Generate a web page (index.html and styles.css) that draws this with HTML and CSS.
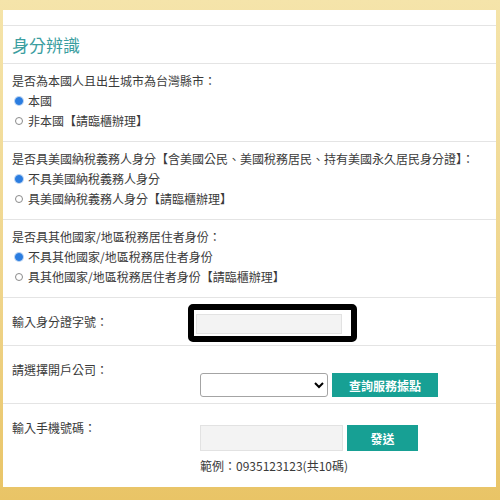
FILE: index.html
```html
<!DOCTYPE html>
<html lang="zh-Hant">
<head>
<meta charset="utf-8">
<title>身分辨識</title>
<link rel="stylesheet" href="styles.css">
</head>
<body>
<div class="page">
  <div class="topbar"></div>
  <h2 class="title">身分辨識</h2>

  <div class="section">
    <div class="question">是否為本國人且出生城市為台灣縣市：</div>
    <label class="option"><input type="radio" name="q1" checked><span>本國</span></label>
    <label class="option"><input type="radio" name="q1"><span>非本國【請臨櫃辦理】</span></label>
  </div>

  <div class="section">
    <div class="question">是否具美國納稅義務人身分【含美國公民、美國稅務居民、持有美國永久居民身分證】：</div>
    <label class="option"><input type="radio" name="q2" checked><span>不具美國納稅義務人身分</span></label>
    <label class="option"><input type="radio" name="q2"><span>具美國納稅義務人身分【請臨櫃辦理】</span></label>
  </div>

  <div class="section">
    <div class="question">是否具其他國家/地區稅務居住者身份：</div>
    <label class="option"><input type="radio" name="q3" checked><span>不具其他國家/地區稅務居住者身份</span></label>
    <label class="option"><input type="radio" name="q3"><span>具其他國家/地區稅務居住者身份【請臨櫃辦理】</span></label>
  </div>

  <div class="row row-id">
    <div class="label">輸入身分證字號：</div>
    <div class="field">
      <span class="redact"><input class="text-input id-input" type="text"></span>
    </div>
  </div>

  <div class="row row-company">
    <div class="label">請選擇開戶公司：</div>
    <div class="field inline">
      <select class="select"><option></option></select>
      <button class="btn btn-wide" type="button">查詢服務據點</button>
    </div>
  </div>

  <div class="row row-phone">
    <div class="label">輸入手機號碼：</div>
    <div class="field">
      <div class="inline">
        <input class="text-input phone-input" type="text">
        <button class="btn btn-send" type="button">發送</button>
      </div>
      <div class="hint">範例：0935123123(共10碼)</div>
    </div>
  </div>
</div>
</body>
</html>
```

FILE: styles.css
```css
* { box-sizing: border-box; }

html, body {
  margin: 0;
  padding: 0;
  height: 500px;
}

body {
  background: linear-gradient(to bottom, #f5e4aa 0%, #efd48a 60%, #e9c466 100%);
  font-family: "Noto Sans CJK TC", "Noto Sans", "Liberation Sans", sans-serif;
  font-size: 12px;
  color: #3a3a3a;
  padding: 10px 4px 13px 3px;
}

.page {
  background: #fff;
  height: 477px;
  overflow: hidden;
}

.topbar {
  height: 16px;
  border-bottom: 1px solid #e4e4e4;
}

.title {
  margin: 0;
  height: 38px;
  padding: 0 9px;
  font-size: 17px;
  font-weight: normal;
  line-height: 38px;
  color: #3b9ea0;
  border-bottom: 1px solid #e4e4e4;
}

.section {
  padding: 7px 9px 9px;
  border-bottom: 1px solid #e4e4e4;
  height: 78px;
}

.question {
  line-height: 20px;
  height: 20px;
  white-space: nowrap;
}

.option {
  display: flex;
  align-items: center;
  height: 20px;
  line-height: 20px;
}

.option input {
  appearance: none;
  -webkit-appearance: none;
  width: 8px;
  height: 8px;
  margin: 0 5px 0 3px;
  border: 1px solid #8a8a8a;
  border-radius: 50%;
  background: #fff;
  flex: none;
}

.option input:checked {
  border-color: #2b7de0;
  background: #2b7de0;
  box-shadow: 0 0 0 1px #b7d2f3;
}

.row {
  display: grid;
  grid-template-columns: 188px 1fr;
  padding: 16px 9px 0;
  border-bottom: 1px solid #e4e4e4;
}

.row-id { height: 48px; }
.row-company { height: 58px; }
.row-phone { height: 84px; border-bottom: none; }

.label {
  line-height: 16px;
}

.inline {
  display: flex;
  align-items: center;
  gap: 4px;
}

.row-company .field,
.row-phone .field {
  padding-top: 5px;
}

.redact {
  display: inline-block;
  margin: -10px 0 0 -12px;
  border: 6px solid #000;
  border-radius: 5px;
  padding: 4px 9px 2px 2px;
  background: #fff;
}

.text-input {
  display: block;
  height: 20px;
  border: 1px solid #e2e2e2;
  background: #f3f3f3;
  padding: 0 4px;
  font: inherit;
  outline: none;
}

.id-input { width: 146px; }

.phone-input {
  width: 143px;
  height: 26px;
}

.select {
  width: 128px;
  height: 24px;
  border: 1px solid #a4a4a4;
  border-radius: 3px;
  background: #fff;
  font: inherit;
}

.btn {
  height: 24px;
  border: none;
  background: #17a094;
  color: #fff;
  font: inherit;
  font-size: 12px;
  font-weight: bold;
  padding: 0;
}

.btn-wide { width: 106px; }

.btn-send {
  width: 71px;
  height: 26px;
}

.hint {
  margin-top: 2px;
  line-height: 26px;
}
```
